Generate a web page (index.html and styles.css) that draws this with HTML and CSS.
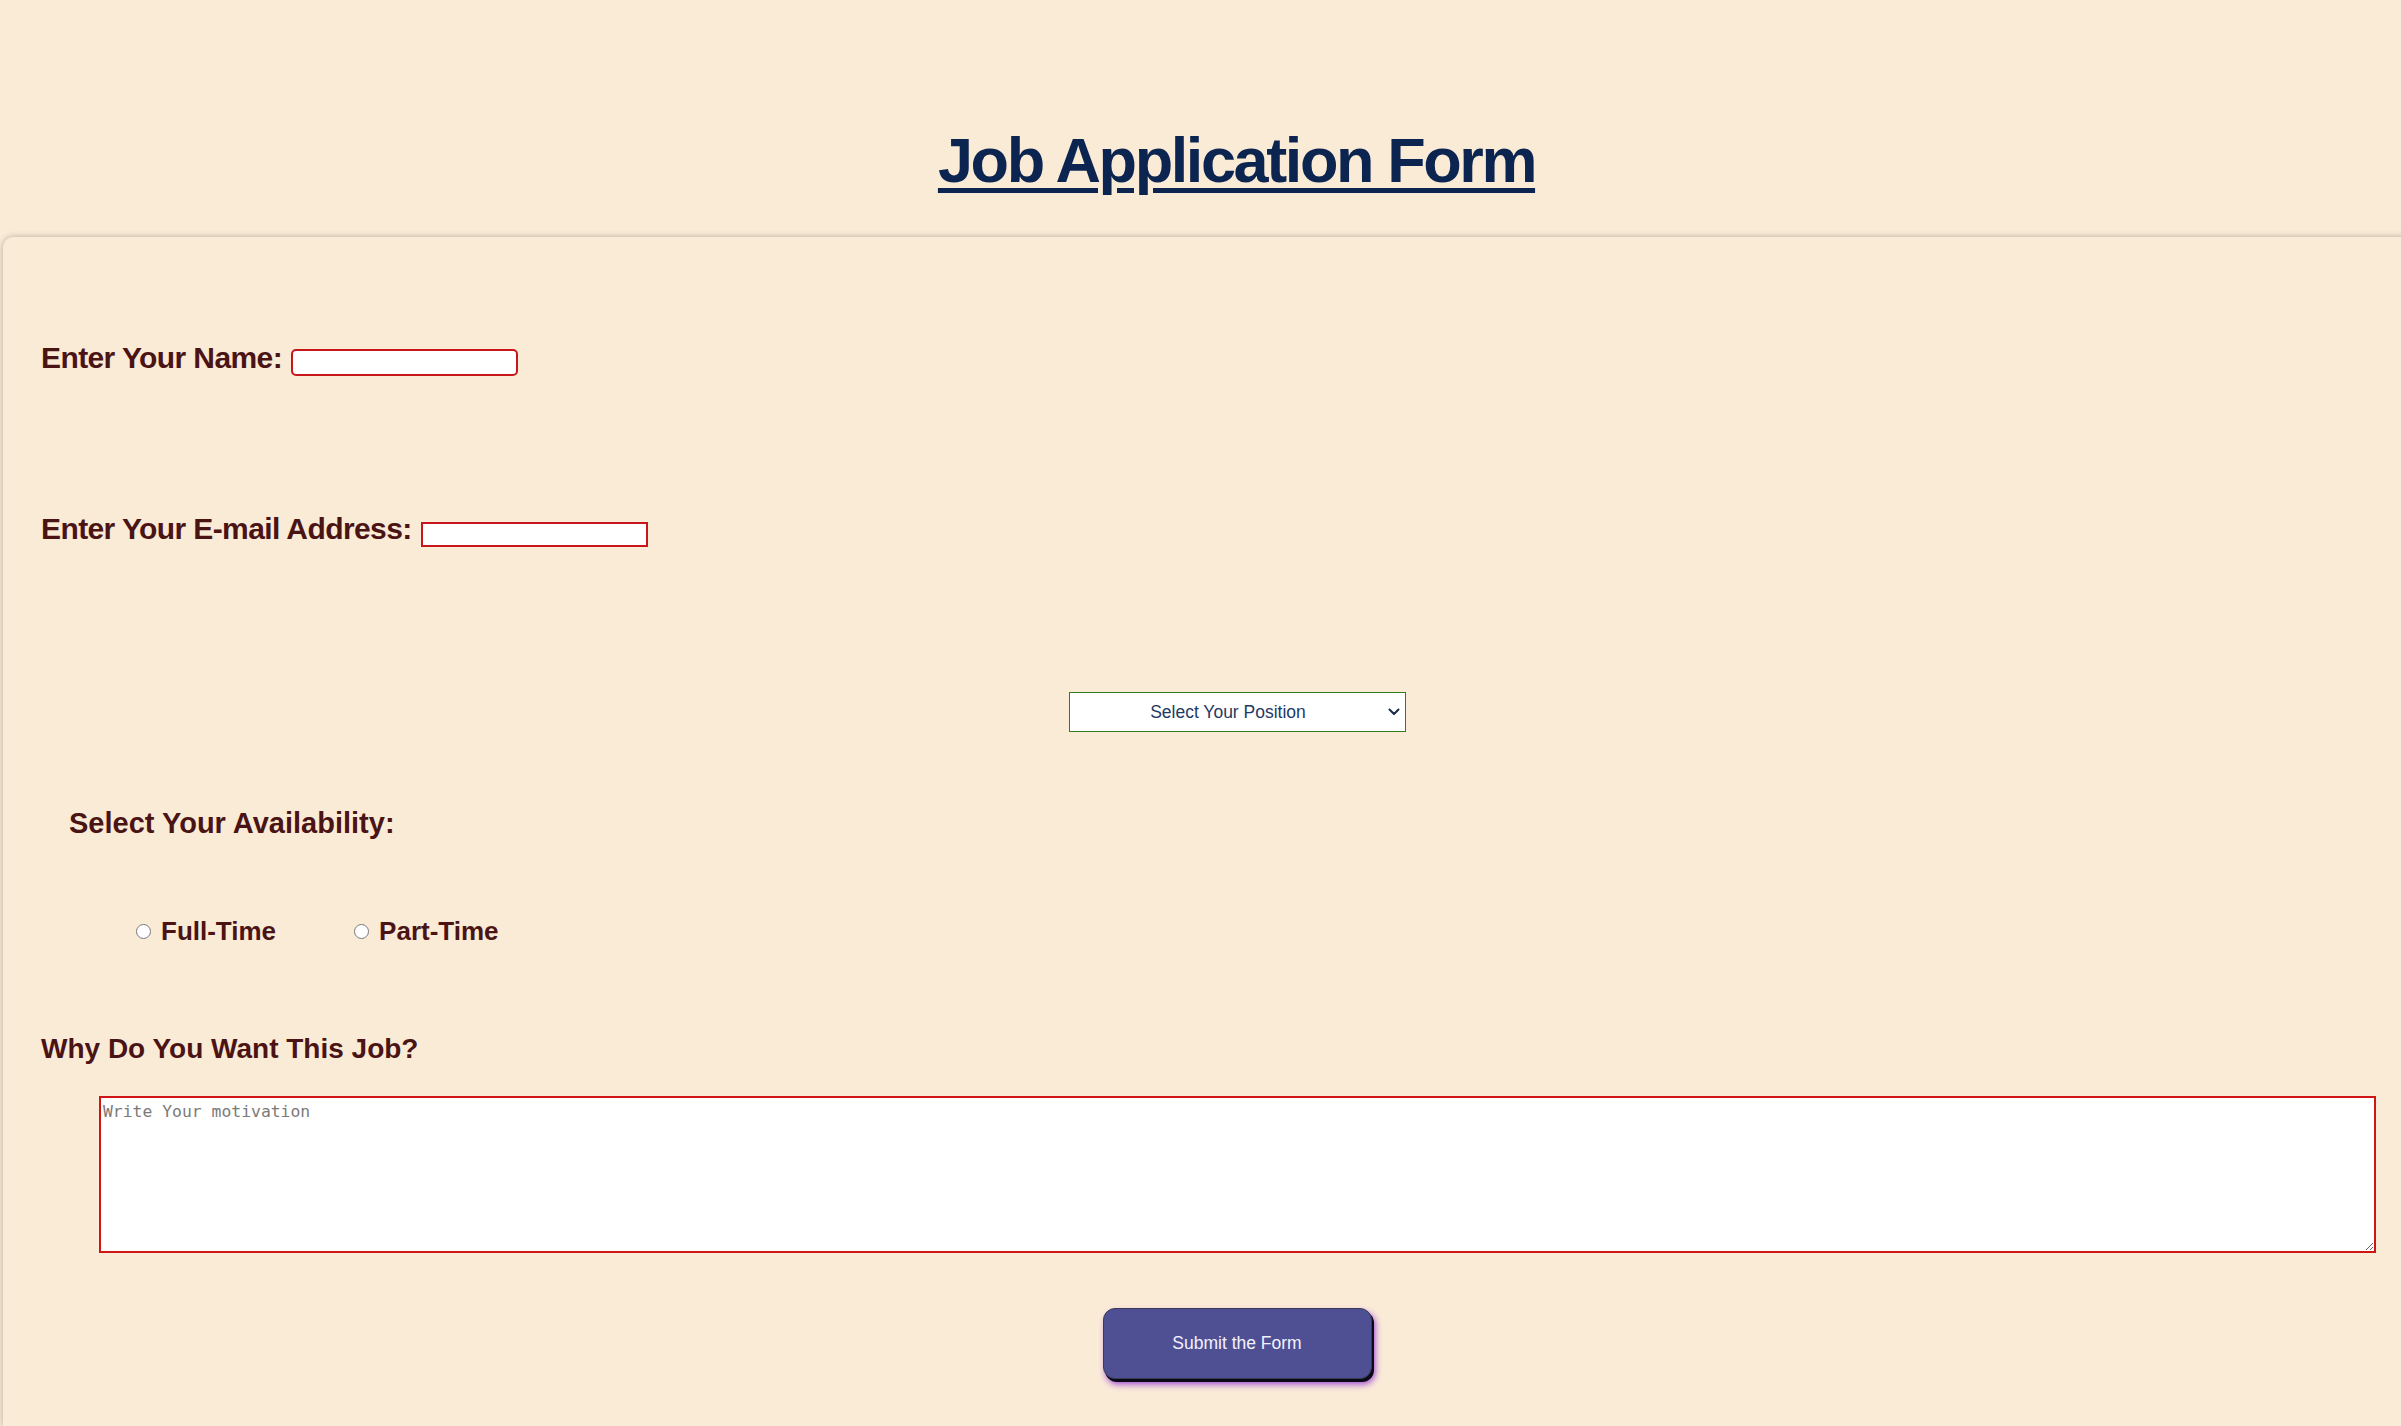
FILE: index.html
```html
<!DOCTYPE html>
<html lang="en">
<head>
<meta charset="utf-8">
<title>Job Application Form</title>
<link rel="stylesheet" href="styles.css">
</head>
<body>
<header class="page-header">
  <h1 class="title">Job Application Form</h1>
</header>
<form class="form-card">
  <div class="row row-name">
    <label class="label-narrow" for="name">Enter Your Name:</label>
    <input class="input-name" type="text" id="name">
  </div>
  <div class="row row-email">
    <label class="label-narrow" for="email">Enter Your E-mail Address:</label>
    <input class="input-email" type="email" id="email">
  </div>
  <div class="center-row row-select">
    <div class="select-wrap">
      <select class="position-select">
        <option>Select Your Position</option>
        <option>Developer</option>
        <option>Designer</option>
        <option>Manager</option>
      </select>
      <svg class="select-chevron" width="12" height="8" viewBox="0 0 12 8" aria-hidden="true">
        <path d="M1.5 1.5 L6 6 L10.5 1.5" fill="none" stroke="#1c2a44" stroke-width="2" stroke-linecap="round" stroke-linejoin="round"/>
      </svg>
    </div>
  </div>
  <p class="label-bold availability-label">Select Your Availability:</p>
  <div class="radio-row">
    <label class="radio-item"><input type="radio" name="availability" class="radio"><span>Full-Time</span></label>
    <label class="radio-item"><input type="radio" name="availability" class="radio"><span>Part-Time</span></label>
  </div>
  <p class="label-bold why-label">Why Do You Want This Job?</p>
  <textarea class="motivation" placeholder="Write Your motivation"></textarea>
  <div class="center-row row-button">
    <button type="button" class="submit-btn">Submit the Form</button>
  </div>
</form>
</body>
</html>
```
FILE: styles.css
```css
html, body {
  margin: 0;
  padding: 0;
  overflow: hidden;
}
body {
  background: #faebd7;
  font-family: "Liberation Sans", Arial, sans-serif;
  height: 1426px;
}
.page-header {
  padding: 129px 0 45px 72px;
  text-align: center;
}
.title {
  margin: 0;
  font-family: "Liberation Sans", Arial, sans-serif;
  font-weight: bold;
  font-size: 63px;
  line-height: 63px;
  letter-spacing: -2.4px;
  color: #0b2450;
  text-decoration: underline;
  text-decoration-thickness: 5px;
  text-underline-offset: 6px;
}
.form-card {
  box-sizing: border-box;
  margin: 0 -70px 0 3px;
  padding: 106px 0 30px 0;
  border-radius: 10px 0 0 0;
  box-shadow: 0 0 6px rgba(0, 0, 0, 0.28);
  height: 1189px;
}
.row {
  display: flex;
  align-items: flex-start;
  padding-left: 38px;
}
.label-narrow {
  font-family: "Liberation Sans", Arial, sans-serif;
  font-weight: bold;
  font-size: 30px;
  line-height: 30px;
  letter-spacing: -0.6px;
  color: #4a1414;
}
.input-name,
.input-email {
  box-sizing: border-box;
  width: 227px;
  background: #fff;
  border: 2px solid #c8161d;
  padding: 0;
  margin-left: 9px;
  outline: none;
}
.input-name {
  height: 27px;
  border-radius: 5px;
  margin-top: 6px;
}
.input-email {
  height: 25px;
  border-radius: 0;
  margin-top: 8px;
}
.row-email {
  margin-top: 138px;
}
.center-row {
  display: flex;
  justify-content: center;
}
.row-select {
  margin-top: 145px;
}
.select-wrap {
  position: relative;
  width: 337px;
  height: 40px;
}
.position-select {
  -webkit-appearance: none;
  appearance: none;
  box-sizing: border-box;
  width: 337px;
  height: 40px;
  border: 1px solid #2e7d1f;
  border-radius: 0;
  background: #fff;
  color: #1f3a64;
  font-family: "Liberation Sans", Arial, sans-serif;
  font-size: 17.5px;
  text-align: center;
  text-align-last: center;
  padding: 0 20px 0 2px;
  outline: none;
}
.select-chevron {
  position: absolute;
  right: 6px;
  top: 16px;
  pointer-events: none;
}
.label-bold {
  margin: 0;
  font-family: "Liberation Sans", Arial, sans-serif;
  font-weight: bold;
  color: #4a1414;
}
.availability-label {
  margin-top: 77px;
  padding-left: 66px;
  font-size: 29px;
  line-height: 29px;
}
.radio-row {
  display: flex;
  align-items: center;
  margin-top: 80px;
  padding-left: 133px;
  gap: 78px;
}
.radio-item {
  display: flex;
  align-items: center;
  gap: 10px;
  font-family: "Liberation Sans", Arial, sans-serif;
  font-weight: bold;
  font-size: 26px;
  line-height: 26px;
  color: #4a1414;
}
.radio {
  width: 15px;
  height: 15px;
  margin: 0;
}
.why-label {
  margin-top: 91px;
  padding-left: 38px;
  font-size: 28px;
  line-height: 28px;
}
.motivation {
  display: block;
  box-sizing: border-box;
  margin: 33px 0 0 96px;
  width: 2277px;
  height: 157px;
  border: 2px solid #d01515;
  border-radius: 0;
  padding: 4px 2px;
  background: #fff;
  font-family: "DejaVu Sans Mono", "Liberation Mono", monospace;
  font-size: 16.4px;
  outline: none;
}
.motivation::placeholder {
  color: #7a7a7a;
}
.row-button {
  margin-top: 55px;
}
.submit-btn {
  box-sizing: border-box;
  width: 269px;
  height: 71px;
  background: #4f4f94;
  color: #f2f2ff;
  border: 1px solid #3a3a5a;
  border-radius: 12px;
  font-family: "Liberation Sans", Arial, sans-serif;
  font-size: 17.5px;
  box-shadow: 2px 3px 0 #0a0a14, 3px 5px 7px #9a3fd6;
  cursor: pointer;
}
```
